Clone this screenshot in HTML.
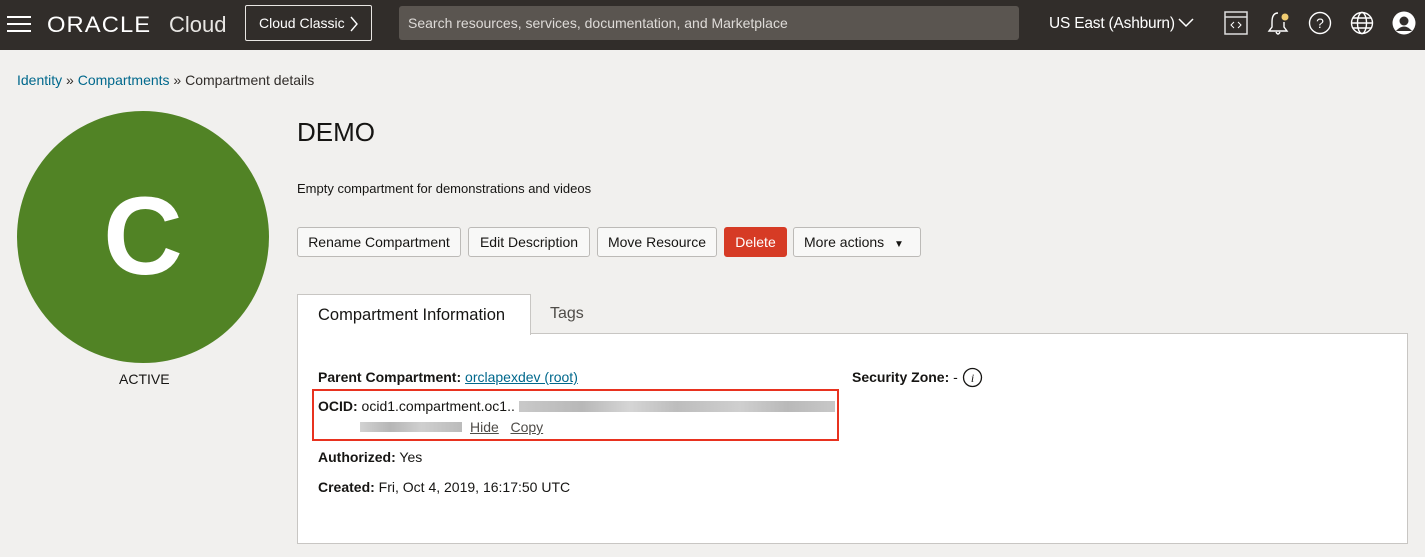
<!DOCTYPE html>
<html><head><meta charset="utf-8"><style>
*{box-sizing:border-box;margin:0;padding:0}
body{width:1425px;height:557px;overflow:hidden;background:#f1f0ee;font-family:"Liberation Sans",sans-serif;color:#161513;position:relative}
.hdr{position:absolute;left:0;top:0;width:1425px;height:50px;background:#312d2a;color:#fff}
.abs{position:absolute}
.btn{position:absolute;top:227px;height:30px;border:1px solid #bcbab7;background:#f8f8f7;border-radius:3px;font-size:14px;line-height:28px;text-align:center;color:#161513}
a{color:#00688c}
.lbl{font-weight:bold}
.row{position:absolute;font-size:14px;color:#161513}
</style></head><body>
<div class="hdr">
 <svg class="abs" style="left:7px;top:15px" width="24" height="18"><g stroke="#fff" stroke-width="2"><line x1="0" y1="2" x2="24" y2="2"/><line x1="0" y1="9" x2="24" y2="9"/><line x1="0" y1="16" x2="24" y2="16"/></g></svg>
 <div class="abs" style="left:47px;top:12px;font-size:22px;letter-spacing:1px;transform:scaleX(1.08);transform-origin:left">ORACLE</div>
 <div class="abs" style="left:169px;top:12px;font-size:22px;color:#e8e6e3">Cloud</div>
 <div class="abs" style="left:245px;top:5px;width:127px;height:36px;border:1px solid #e8e6e3;border-radius:2px;font-size:14px;line-height:34px;padding-left:13px">Cloud Classic</div>
 <svg class="abs" style="left:349px;top:16px" width="10" height="16"><polyline points="2,1 8,8 2,15" fill="none" stroke="#fff" stroke-width="1.4"/></svg>
 <div class="abs" style="left:399px;top:6px;width:620px;height:34px;background:#5a5550;border-radius:3px;font-size:14px;line-height:34px;padding-left:9px;color:#dedbd8">Search resources, services, documentation, and Marketplace</div>
 <div class="abs" style="left:1049px;top:15px;font-size:15.5px;letter-spacing:-0.2px">US East (Ashburn)</div>
 <svg class="abs" style="left:1178px;top:17px" width="16" height="12"><polyline points="1,2 8,9 15,2" fill="none" stroke="#fff" stroke-width="1.5"/></svg>
 <svg class="abs" style="left:1224px;top:11px" width="24" height="24"><rect x="1" y="1" width="22" height="22" fill="none" stroke="#ddd" stroke-width="1.5"/><line x1="1" y1="6" x2="23" y2="6" stroke="#ddd" stroke-width="1.5"/><polyline points="10,11 7,14 10,17" fill="none" stroke="#fff"/><polyline points="14,11 17,14 14,17" fill="none" stroke="#fff"/></svg>
 <svg class="abs" style="left:1267px;top:10px" width="24" height="26"><path d="M11 3 C6 3 5 8 5 12 L5 17 L2 21 L20 21 L17 17 L17 12" fill="none" stroke="#fff" stroke-width="1.4"/><path d="M9 22 Q11 26 13 22" fill="none" stroke="#fff" stroke-width="1.4"/><circle cx="18" cy="7" r="3.5" fill="#f0cc71"/></svg>
 <svg class="abs" style="left:1308px;top:11px" width="24" height="24"><circle cx="12" cy="12" r="10.5" fill="none" stroke="#fff" stroke-width="1.4"/><text x="12" y="17" text-anchor="middle" font-size="14" fill="#fff" font-family="Liberation Sans">?</text></svg>
 <svg class="abs" style="left:1350px;top:11px" width="24" height="24"><g fill="none" stroke="#fff" stroke-width="1.4"><circle cx="12" cy="12" r="10.5"/><ellipse cx="12" cy="12" rx="4.5" ry="10.5"/><line x1="1.5" y1="12" x2="22.5" y2="12"/><line x1="3" y1="7" x2="21" y2="7"/><line x1="3" y1="17" x2="21" y2="17"/></g></svg>
 <svg class="abs" style="left:1392px;top:11px" width="24" height="24"><circle cx="12" cy="12" r="11.5" fill="#fff"/><circle cx="12" cy="10" r="4.5" fill="#312d2a"/><path d="M4 20 Q12 11 20 20" fill="#312d2a"/></svg>
</div>
<div class="abs" style="left:17px;top:72px;font-size:14px;color:#312d2a"><a style="text-decoration:none">Identity</a> » <a style="text-decoration:none">Compartments</a> » Compartment details</div>
<div class="abs" style="left:17px;top:111px;width:252px;height:252px;border-radius:50%;background:#518325;color:#fff;font-weight:bold;font-size:110px;line-height:252px;text-align:center">C</div>
<div class="abs" style="left:119px;top:371px;font-size:14px">ACTIVE</div>
<div class="abs" style="left:297px;top:117px;font-size:26px">DEMO</div>
<div class="abs" style="left:297px;top:181px;font-size:13px">Empty compartment for demonstrations and videos</div>
<div class="btn" style="left:297px;width:164px">Rename Compartment</div>
<div class="btn" style="left:468px;width:122px">Edit Description</div>
<div class="btn" style="left:597px;width:120px">Move Resource</div>
<div class="btn" style="left:724px;width:63px;background:#d63b25;border-color:#d63b25;color:#fff">Delete</div>
<div class="btn" style="left:793px;width:128px;text-align:left;padding-left:10px">More actions <span style="font-size:10px;margin-left:6px">▼</span></div>
<div class="abs" style="left:297px;top:333px;width:1111px;height:211px;background:#fff;border:1px solid #c8c6c3"></div>
<div class="abs" style="left:297px;top:294px;width:234px;height:41px;background:#fff;border:1px solid #c8c6c3;border-bottom:none;font-size:16.5px;line-height:40px;padding-left:20px">Compartment Information</div>
<div class="abs" style="left:550px;top:305px;font-size:16px;color:#4f4c48">Tags</div>
<div class="row" style="left:318px;top:369px"><span class="lbl">Parent Compartment:</span> <a style="text-decoration:underline">orclapexdev (root)</a></div>
<div class="row" style="left:852px;top:369px"><span class="lbl">Security Zone:</span> - </div>
<svg class="abs" style="left:962px;top:367px" width="21" height="21"><circle cx="10.5" cy="10.5" r="9" fill="none" stroke="#161513" stroke-width="1.3"/><text x="10.5" y="15" text-anchor="middle" font-size="12" font-style="italic" font-family="Liberation Serif" fill="#161513">i</text></svg>
<div class="abs" style="left:312px;top:389px;width:527px;height:52px;border:2px solid #e8321f"></div>
<div class="row" style="left:318px;top:398px"><span class="lbl">OCID:</span> ocid1.compartment.oc1..</div>
<div class="abs" style="left:519px;top:401px;width:316px;height:11px;background:linear-gradient(90deg,#c9c9c9,#b8b8b8 20%,#d5d5d5 35%,#bdbdbd 50%,#cfcfcf 70%,#b9b9b9 85%,#c8c8c8)"></div>
<div class="abs" style="left:360px;top:422px;width:102px;height:10px;background:linear-gradient(90deg,#d2d2d2,#b6b6b6 30%,#cfcfcf 60%,#bbbbbb)"></div>
<div class="row" style="left:470px;top:419px;color:#4f4c48"><u>Hide</u>&nbsp;&nbsp;&nbsp;<u>Copy</u></div>
<div class="row" style="left:318px;top:449px"><span class="lbl">Authorized:</span> Yes</div>
<div class="row" style="left:318px;top:479px"><span class="lbl">Created:</span> Fri, Oct 4, 2019, 16:17:50 UTC</div>
</body></html>
